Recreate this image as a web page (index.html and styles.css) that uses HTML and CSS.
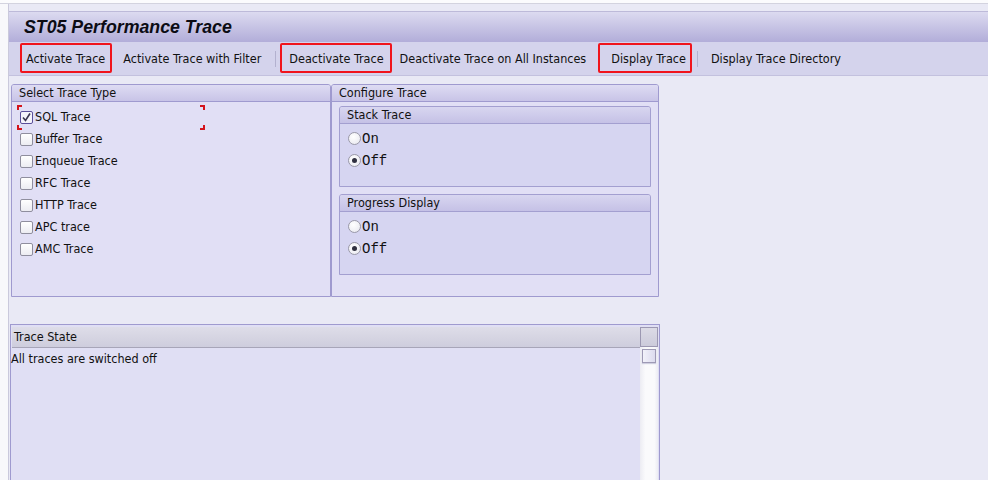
FILE: index.html
```html
<!DOCTYPE html>
<html>
<head>
<meta charset="utf-8">
<link rel="stylesheet" href="styles.css">
</head>
<body>
<div class="top"></div>
<div class="frame">
  <div class="titlebar"><span class="title">ST05 Performance Trace</span></div>
  <div class="toolbar">
    <span class="btn btn-a hl">Activate Trace</span>
    <span class="btn btn-b">Activate Trace with Filter</span>
    <span class="sep sep-1"></span>
    <span class="btn btn-c hl">Deactivate Trace</span>
    <span class="btn btn-d">Deactivate Trace on All Instances</span>
    <span class="btn btn-e hl">Display Trace</span>
    <span class="sep sep-2"></span>
    <span class="btn btn-f">Display Trace Directory</span>
  </div>
  <div class="groups">
    <div class="group g-select">
      <div class="ghead">Select Trace Type</div>
      <div class="gbody checks">
        <div class="row first">
          <span class="focus"><i class="c tl"></i><i class="c tr"></i><i class="c bl"></i><i class="c br"></i></span>
          <span class="cb checked"><svg width="11" height="11" viewBox="0 0 11 11"><path d="M2 5.5 L4.5 8.5 L9 1.5" fill="none" stroke="#3a3550" stroke-width="1.6"/></svg></span><span class="lbl">SQL Trace</span>
        </div>
        <div class="row"><span class="cb"></span><span class="lbl">Buffer Trace</span></div>
        <div class="row"><span class="cb"></span><span class="lbl">Enqueue Trace</span></div>
        <div class="row"><span class="cb"></span><span class="lbl">RFC Trace</span></div>
        <div class="row"><span class="cb"></span><span class="lbl">HTTP Trace</span></div>
        <div class="row"><span class="cb"></span><span class="lbl">APC trace</span></div>
        <div class="row"><span class="cb"></span><span class="lbl">AMC Trace</span></div>
      </div>
    </div>
    <div class="group g-config">
      <div class="ghead">Configure Trace</div>
      <div class="gbody config">
        <div class="sub">
          <div class="shead">Stack Trace</div>
          <div class="sbody">
            <div class="row"><span class="rb"></span><span class="mono">On</span></div>
            <div class="row"><span class="rb on"></span><span class="mono">Off</span></div>
          </div>
        </div>
        <div class="sub">
          <div class="shead">Progress Display</div>
          <div class="sbody">
            <div class="row"><span class="rb"></span><span class="mono">On</span></div>
            <div class="row"><span class="rb on"></span><span class="mono">Off</span></div>
          </div>
        </div>
      </div>
    </div>
  </div>
  <div class="state">
    <div class="state-main">
      <div class="thead">Trace State</div>
      <div class="tbody">All traces are switched off</div>
    </div>
    <div class="scroll">
      <div class="scorner"></div>
      <div class="strack"><div class="sthumb"></div></div>
    </div>
  </div>
</div>
</body>
</html>
```
FILE: styles.css
```css
* { box-sizing: border-box; }
html, body { margin: 0; padding: 0; }
body {
  width: 988px;
  height: 480px;
  overflow: hidden;
  background: #f8f8fb;
  font-family: "DejaVu Sans Condensed", "DejaVu Sans", sans-serif;
  font-size: 12.5px;
  color: #111;
}
.top {
  height: 4px;
  background: #fbfbfd;
  border-bottom: 1px solid #d3d3df;
}
.frame {
  margin-left: 8px;
  height: 476px;
  border-left: 1px solid #cac9dc;
  background: #e9e9f5;
  padding-top: 7px;
}
.titlebar {
  height: 31px;
  border-top: 1px solid #bdbad9;
  background: linear-gradient(#dcdaf0, #b2add9);
  display: flex;
  align-items: center;
  padding-left: 15px;
}
.title {
  font-family: "Liberation Sans", sans-serif;
  font-weight: bold;
  font-style: italic;
  font-size: 17.75px;
  color: #0c0c14;
}
.toolbar {
  height: 34px;
  background: #d4d3ec;
  border-bottom: 1px solid #c3c1de;
  display: flex;
  align-items: flex-start;
  padding-top: 1px;
  padding-left: 11px;
}
.btn {
  height: 30px;
  display: flex;
  align-items: center;
  border: 2px solid transparent;
  border-radius: 2px;
  white-space: nowrap;
}
.hl { border-color: #f0141c; }
.btn-a { padding: 0 5px 0 4px; }
.btn-b { margin-left: 5px; padding: 0 4px; }
.btn-c { margin-left: 4px; padding: 0 6px 0 7px; }
.btn-d { margin-left: 2px; padding: 0 4px; }
.btn-e { margin-left: 6px; padding: 0 4px 0 11px; }
.btn-f { margin-left: 7px; padding: 0 4px; }
.sep {
  width: 1px;
  height: 16px;
  margin-top: 8px;
  background: #b3b1cf;
}
.sep-1 { margin-left: 8px; }
.sep-2 { margin-left: 5px; }
.groups {
  display: flex;
  margin: 8px 0 0 2px;
}
.group {
  height: 213px;
  border: 1px solid #9f9acf;
  border-radius: 3px 3px 0 0;
  background: #e1dff5;
}
.g-select { width: 320px; }
.g-config { width: 328px; }
.ghead {
  height: 17px;
  line-height: 16px;
  padding-left: 7px;
  background: linear-gradient(#dedcf3, #c8c4e7);
  border-bottom: 1px solid #9f9acf;
  border-radius: 2px 2px 0 0;
}
.checks { padding: 4px 0 0 8px; }
.row {
  height: 22px;
  display: flex;
  align-items: center;
  position: relative;
}
.cb {
  width: 13px;
  height: 13px;
  border: 1px solid #8f8e9e;
  border-radius: 2px;
  background: linear-gradient(#ffffff, #ececf2);
  margin-right: 2px;
  display: flex;
  align-items: center;
  justify-content: center;
}
.cb.checked {
  border-color: #5a4f9a;
  background: #f4f3fb;
}
.lbl { line-height: 14px; }
.focus {
  position: absolute;
  left: -3px;
  top: -1px;
  width: 188px;
  height: 25px;
}
.c { position: absolute; width: 5px; height: 5px; border: 0 solid #d4141c; }
.c.tl { left: 0; top: 0; border-left-width: 2px; border-top-width: 2px; }
.c.tr { right: 0; top: 0; border-right-width: 2px; border-top-width: 2px; }
.c.bl { left: 0; bottom: 0; border-left-width: 2px; border-bottom-width: 2px; }
.c.br { right: 0; bottom: 0; border-right-width: 2px; border-bottom-width: 2px; }
.config { padding: 4px 0 0 7px; }
.sub {
  width: 312px;
  height: 81px;
  border: 1px solid #a39fd0;
  border-radius: 3px 3px 0 0;
  background: #d6d5f1;
  margin-bottom: 7px;
}
.shead {
  height: 17px;
  line-height: 16px;
  padding-left: 7px;
  background: linear-gradient(#d8d6f0, #c5c1e6);
  border-bottom: 1px solid #a39fd0;
  border-radius: 2px 2px 0 0;
}
.sbody { padding: 3px 0 0 8px; }
.rb {
  width: 13px;
  height: 13px;
  border-radius: 50%;
  border: 1px solid #9a99a8;
  background: radial-gradient(circle at 40% 35%, #ffffff, #e6e6ee);
  margin-right: 1px;
  position: relative;
}
.rb.on::after {
  content: "";
  position: absolute;
  left: 3px;
  top: 3px;
  width: 5px;
  height: 5px;
  border-radius: 50%;
  background: #303040;
}
.mono {
  font-family: "Liberation Mono", monospace;
  font-size: 14px;
  padding-top: 1px;
}
.state {
  margin: 27px 0 0 1px;
  width: 650px;
  height: 160px;
  border: 1px solid #9f9acf;
  border-bottom: none;
  background: #e0dff4;
  display: flex;
  padding: 2px 1px 0 1px;
}
.state-main { flex: 1; }
.thead {
  height: 21px;
  line-height: 20px;
  padding-left: 2px;
  background: linear-gradient(#dedde8, #cecddd);
  border-bottom: 1px solid #a7a5b8;
}
.tbody {
  margin: 3px 0 0 -1px;
  line-height: 16px;
}
.scroll {
  width: 18px;
  display: flex;
  flex-direction: column;
}
.scorner {
  height: 20px;
  border: 1px solid #9c98b2;
  background: linear-gradient(#dcdbe6, #cccbdb);
}
.strack {
  flex: 1;
  background: linear-gradient(90deg, #ececf3, #fafafc 30%, #fafafc 80%, #ececf3);
  padding: 2px 1px 0 2px;
}
.sthumb {
  width: 14px;
  height: 14px;
  border: 1px solid #9e9ab5;
  background: linear-gradient(90deg, #f2f2fa, #dcdbee);
  box-shadow: 0 1px 1px #cfcfe0;
}
```
